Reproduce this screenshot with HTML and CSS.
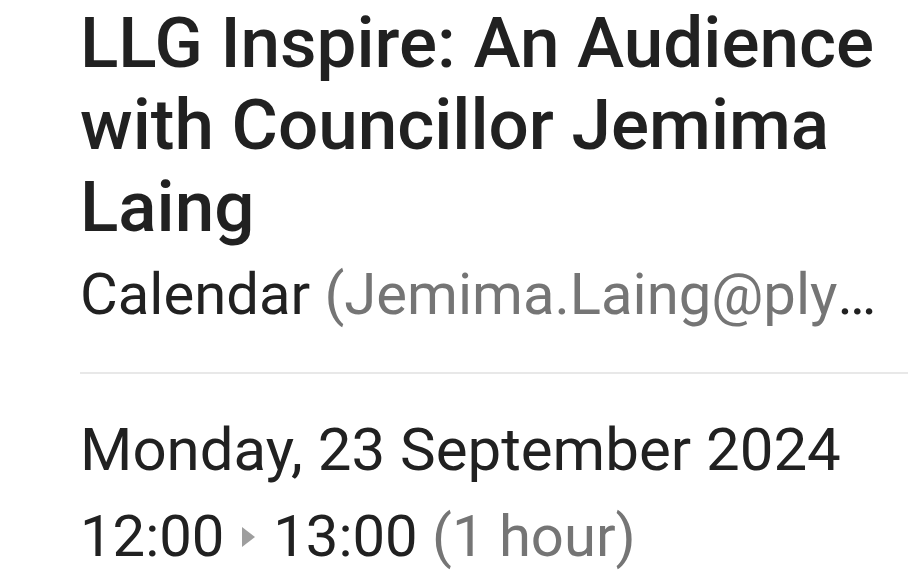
FILE: index.html
```html
<!DOCTYPE html>
<html>
<head>
<meta charset="utf-8">
<link rel="stylesheet" href="styles.css">
</head>
<body>
<div class="page">
  <div class="header">
    <h1 class="title">LLG Inspire: An Audience with Councillor Jemima Laing</h1>
    <div class="calendar"><span class="cal-name">Calendar</span> <span class="muted">(Jemima.Laing@plymouth.gov.uk)</span></div>
  </div>
  <div class="divider"></div>
  <div class="when">
    <div class="date">Monday, 23 September 2024</div>
    <div class="time">12:00 <span class="arrow"></span> 13:00 <span class="muted">(1 hour)</span></div>
  </div>
</div>
</body>
</html>
```

FILE: styles.css
```css
html, body {
  margin: 0;
  padding: 0;
  background: #ffffff;
}
.page {
  font-family: Roboto, "Noto Sans", sans-serif;
  color: #212121;
  padding-left: 80px;
  width: 828px;
  overflow: hidden;
}
.header {
  padding-right: 26px;
}
.title {
  margin: 0 -26px 0 0;
  padding-top: 2px;
  font-size: 71px;
  font-weight: 500;
  line-height: 82px;
  letter-spacing: 0;
}
.calendar {
  padding-top: 6px;
  font-size: 58px;
  line-height: 80px;
  white-space: nowrap;
  overflow: hidden;
  text-overflow: ellipsis;
}
.muted {
  color: #757575;
}
.divider {
  height: 2px;
  background: #e8e8e8;
  margin-top: 38px;
}
.when {
  padding-top: 32px;
}
.date {
  font-size: 60px;
  line-height: 87px;
  white-space: nowrap;
}
.time {
  font-size: 58px;
  line-height: 87px;
  white-space: nowrap;
}
.arrow {
  display: inline-block;
  width: 0;
  height: 0;
  margin: 0 4px 0 3px;
  border-top: 10px solid transparent;
  border-bottom: 10px solid transparent;
  border-left: 13px solid #9e9e9e;
  vertical-align: 9px;
}
```
